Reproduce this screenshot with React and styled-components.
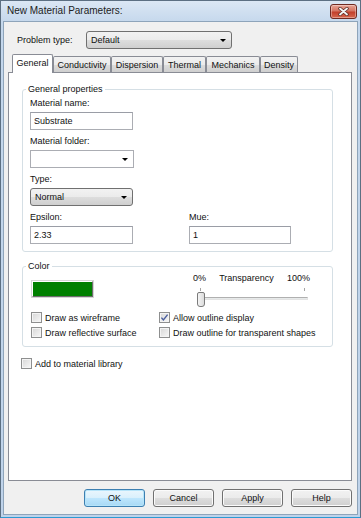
import styled, { createGlobalStyle } from "styled-components";

const GlobalStyle = createGlobalStyle`
  body { margin: 0; background: #fff; }
  * { box-sizing: border-box; }
`;

const Window = styled.div`
  width: 361px;
  height: 518px;
  display: flex;
  flex-direction: column;
  padding: 0 2px 2px 2px;
  border: 1px solid #5c6f82;
  border-bottom-color: #2c9ad3;
  background: linear-gradient(#dbe7f4, #c4d7ec 22px, #bfd3ea);
  font-family: "Liberation Sans", Arial, sans-serif;
  font-size: 9px;
  color: #111;
`;

const TitleBar = styled.div`
  height: 20px;
  display: flex;
  align-items: flex-start;
  justify-content: space-between;
  padding: 0 1px 0 4px;
`;

const Title = styled.span`
  font-size: 10px;
  line-height: 20px;
  color: #222;
`;

const CloseButton = styled.div`
  width: 27px;
  height: 15px;
  margin-top: 3px;
  display: flex;
  align-items: center;
  justify-content: center;
  border: 1px solid #6e2a22;
  border-radius: 3px;
  background: linear-gradient(#e8a496, #d47563 45%, #c2402c 55%, #d7684f);
  box-shadow: inset 0 0 0 1px rgba(255, 255, 255, 0.35);
`;

const Client = styled.div`
  flex: 1;
  display: flex;
  flex-direction: column;
  background: #f0f0f0;
  border: 1px solid #8ea4ba;
  padding: 0 5px 7px 4px;
`;

const ProblemRow = styled.div`
  display: flex;
  align-items: center;
  margin-top: 9px;
  padding-left: 9px;
`;

const InlineLabel = styled.span`
  width: 69px;
`;

const Combo = styled.div`
  width: ${(p) => p.$w}px;
  height: 18px;
  display: flex;
  align-items: center;
  justify-content: space-between;
  padding: 0 5px 0 4px;
  border: 1px solid ${(p) => (p.$editable ? "#abadb3" : "#707070")};
  border-radius: ${(p) => (p.$editable ? "0" : "3px")};
  background: ${(p) =>
    p.$editable
      ? "#fff"
      : "linear-gradient(#f2f2f2, #ebebeb 50%, #dddddd 51%, #cfcfcf)"};
`;

const Arrow = styled.span`
  width: 0;
  height: 0;
  border-left: 3px solid transparent;
  border-right: 3px solid transparent;
  border-top: 3px solid #000;
`;

const TabStrip = styled.div`
  display: flex;
  align-items: flex-end;
  height: 19px;
  margin-top: 5px;
  padding-left: 4px;
`;

const Tab = styled.div`
  width: ${(p) => p.$w}px;
  height: ${(p) => (p.$active ? 19 : 16)}px;
  margin-bottom: ${(p) => (p.$active ? 0 : 1)}px;
  display: flex;
  align-items: center;
  justify-content: center;
  padding-bottom: ${(p) => (p.$active ? 2 : 0)}px;
  border: 1px solid #898c95;
  border-bottom: none;
  border-radius: 2px 2px 0 0;
  background: ${(p) =>
    p.$active ? "#fff" : "linear-gradient(#f2f2f2, #ebebeb 50%, #dddddd 51%, #cfcfcf)"};
  position: ${(p) => (p.$active ? "relative" : "static")};
  z-index: ${(p) => (p.$active ? 1 : "auto")};
`;

const Panel = styled.div`
  flex: 1;
  display: flex;
  flex-direction: column;
  margin-top: -1px;
  background: #fff;
  border: 1px solid #898c95;
  padding: 10px 18px 0 13px;
`;

const GroupBox = styled.fieldset`
  margin: ${(p) => (p.$spaced ? "8px" : "0")} 0 0 0;
  border: 1px solid #d5dfe5;
  border-radius: 3px;
  padding: ${(p) => p.$pad};
  min-width: 0;
`;

const Legend = styled.legend`
  padding: 0 2px;
  margin-left: ${(p) => p.$shift}px;
  line-height: 12px;
`;

const Field = styled.div`
  margin-bottom: ${(p) => (p.$last ? 0 : 5)}px;
`;

const Label = styled.div`
  line-height: 12px;
  margin-bottom: 3px;
`;

const TextBox = styled.input`
  display: block;
  width: ${(p) => p.$w}px;
  height: 18px;
  padding: 0 3px;
  border: 1px solid #abadb3;
  border-top-color: #9a9da6;
  background: #fff;
  font: inherit;
  color: #111;
  outline: none;
`;

const PairRow = styled.div`
  display: grid;
  grid-template-columns: 159px 1fr;
`;

const ColorRow = styled.div`
  display: flex;
  align-items: flex-start;
  justify-content: space-between;
`;

const Swatch = styled.div`
  width: 61px;
  height: 16px;
  margin-top: 9px;
  background: ${(p) => p.$color};
  border: 1px solid;
  border-color: #fff #6d6d6d #6d6d6d #fff;
  box-shadow: 0 0 0 1px #d6d6d6;
`;

const SliderBlock = styled.div`
  width: 117px;
  margin-right: 16px;
`;

const SliderLabels = styled.div`
  display: flex;
  justify-content: space-between;
  line-height: 12px;
`;

const SliderArea = styled.div`
  position: relative;
  height: 22px;
`;

const Tick = styled.div`
  position: absolute;
  top: 4px;
  left: ${(p) => p.$x}px;
  width: 1px;
  height: 3px;
  background: #a5a5a5;
`;

const Track = styled.div`
  position: absolute;
  top: 13px;
  left: 7px;
  width: 108px;
  height: 3px;
  border: 1px solid;
  border-color: #b0b0b0 #e3e3e3 #e3e3e3 #b0b0b0;
  background: #e7eaea;
`;

const Thumb = styled.div`
  position: absolute;
  top: 8px;
  left: 4px;
  width: 8px;
  height: 15px;
  border: 1px solid #7b7b7b;
  border-radius: 2px 2px 3px 3px;
  background: linear-gradient(90deg, #f4f4f4, #dcdcdc);
`;

const CheckGrid = styled.div`
  display: grid;
  grid-template-columns: 128px 1fr;
  margin: 4px 0 0 -1px;
`;

const CheckRow = styled.div`
  display: flex;
  align-items: center;
  gap: 3px;
  height: 15px;
  white-space: nowrap;
  margin-top: ${(p) => p.$top || 0}px;
  margin-left: ${(p) => p.$left || 0}px;
`;

const Box = styled.span`
  flex: none;
  width: 11px;
  height: 11px;
  display: flex;
  align-items: center;
  justify-content: center;
  border: 1px solid #8e8f8f;
  background: linear-gradient(135deg, #d6d6d6, #f8f8f8);
  box-shadow: inset 0 0 0 1px #f4f4f4;
`;

const ButtonRow = styled.div`
  display: flex;
  justify-content: flex-end;
  gap: 8px;
  margin-top: 8px;
`;

const Button = styled.button`
  width: 61px;
  height: 18px;
  padding: 0;
  border: 1px solid ${(p) => (p.$primary ? "#3c7fb1" : "#707070")};
  border-radius: 3px;
  background: ${(p) =>
    p.$primary
      ? "linear-gradient(#eaf6fd, #d9f0fc 50%, #bee6fd 51%, #a7d9f5)"
      : "linear-gradient(#f2f2f2, #ebebeb 50%, #dddddd 51%, #cfcfcf)"};
  box-shadow: inset 0 0 0 1px ${(p) => (p.$primary ? "#b6e4f9" : "#fbfbfb")};
  font: inherit;
  color: #111;
`;

const Checkbox = ({ checked, children, top, left }) => (
  <CheckRow $top={top} $left={left}>
    <Box>
      {checked && (
        <svg width="9" height="9" viewBox="0 0 9 9">
          <polyline points="1.4,4.6 3.4,7 7.6,1.6" fill="none" stroke="#4a5e9e" strokeWidth="1.4" />
        </svg>
      )}
    </Box>
    <span>{children}</span>
  </CheckRow>
);

const tabs = [
  { name: "General", w: 41 },
  { name: "Conductivity", w: 58 },
  { name: "Dispersion", w: 52 },
  { name: "Thermal", w: 43 },
  { name: "Mechanics", w: 54 },
  { name: "Density", w: 38 },
];

export default function App() {
  return (
    <>
      <GlobalStyle />
      <Window>
        <TitleBar>
          <Title>New Material Parameters:</Title>
          <CloseButton>
            <svg width="11" height="9" viewBox="0 0 11 9">
              <path d="M2 1.5 L9 7.5 M9 1.5 L2 7.5" stroke="#5a2a24" strokeWidth="3.4" strokeLinecap="round" />
              <path d="M2 1.5 L9 7.5 M9 1.5 L2 7.5" stroke="#f4f4f4" strokeWidth="1.9" strokeLinecap="round" />
            </svg>
          </CloseButton>
        </TitleBar>
        <Client>
          <ProblemRow>
            <InlineLabel>Problem type:</InlineLabel>
            <Combo $w={146}>
              <span>Default</span>
              <Arrow />
            </Combo>
          </ProblemRow>

          <TabStrip>
            {tabs.map((t, i) => (
              <Tab key={t.name} $w={t.w} $active={i === 0}>
                {t.name}
              </Tab>
            ))}
          </TabStrip>

          <Panel>
            <GroupBox $pad="2px 8px 7px 7px">
              <Legend $shift={-4}>General properties</Legend>
              <Field>
                <Label>Material name:</Label>
                <TextBox $w={103} defaultValue="Substrate" readOnly />
              </Field>
              <Field>
                <Label>Material folder:</Label>
                <Combo $w={104} $editable>
                  <span />
                  <Arrow />
                </Combo>
              </Field>
              <Field>
                <Label>Type:</Label>
                <Combo $w={103}>
                  <span>Normal</span>
                  <Arrow />
                </Combo>
              </Field>
              <PairRow>
                <Field $last>
                  <Label>Epsilon:</Label>
                  <TextBox $w={103} defaultValue="2.33" readOnly />
                </Field>
                <Field $last>
                  <Label>Mue:</Label>
                  <TextBox $w={102} defaultValue="1" readOnly />
                </Field>
              </PairRow>
            </GroupBox>

            <GroupBox $spaced $pad="0 6px 6px 9px">
              <Legend $shift={-6}>Color</Legend>
              <ColorRow>
                <Swatch $color="#008000" />
                <SliderBlock>
                  <SliderLabels>
                    <span>0%</span>
                    <span>Transparency</span>
                    <span>100%</span>
                  </SliderLabels>
                  <SliderArea>
                    <Tick $x={7} />
                    <Tick $x={111} />
                    <Track />
                    <Thumb />
                  </SliderArea>
                </SliderBlock>
              </ColorRow>
              <CheckGrid>
                <Checkbox>Draw as wireframe</Checkbox>
                <Checkbox checked>Allow outline display</Checkbox>
                <Checkbox>Draw reflective surface</Checkbox>
                <Checkbox>Draw outline for transparent shapes</Checkbox>
              </CheckGrid>
            </GroupBox>

            <Checkbox top={9} left={-1}>Add to material library</Checkbox>
          </Panel>

          <ButtonRow>
            <Button $primary>OK</Button>
            <Button>Cancel</Button>
            <Button>Apply</Button>
            <Button>Help</Button>
          </ButtonRow>
        </Client>
      </Window>
    </>
  );
}
